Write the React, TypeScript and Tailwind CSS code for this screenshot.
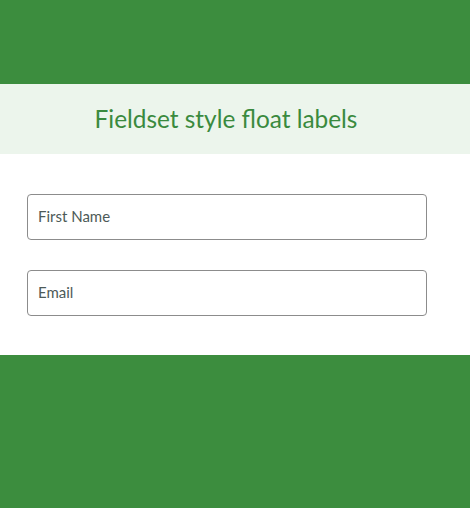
export default function App() {
  return (
    <div className="min-h-[508px] w-full bg-[#3c8d3e] font-['Lato',sans-serif]">
      <div className="h-[84px]" />
      <div className="flex h-[70px] items-center justify-center bg-[#ecf5ec] pr-[18px]">
        <h1 className="text-[24.4px] font-normal text-[#3a8a3e]">Fieldset style float labels</h1>
      </div>
      <div className="flex h-[201px] flex-col gap-[30px] bg-white pl-[27px] pt-[40px]">
        <input
          type="text"
          placeholder="First Name"
          className="h-[46px] w-[400px] rounded-[4px] border border-[#8c8c8c] px-[10px] pb-[2px] text-[15px] text-[#4d5a58] placeholder:text-[#4d5a58] outline-none"
        />
        <input
          type="email"
          placeholder="Email"
          className="h-[46px] w-[400px] rounded-[4px] border border-[#8c8c8c] px-[10px] pb-[2px] text-[15px] text-[#4d5a58] placeholder:text-[#4d5a58] outline-none"
        />
      </div>
    </div>
  );
}
